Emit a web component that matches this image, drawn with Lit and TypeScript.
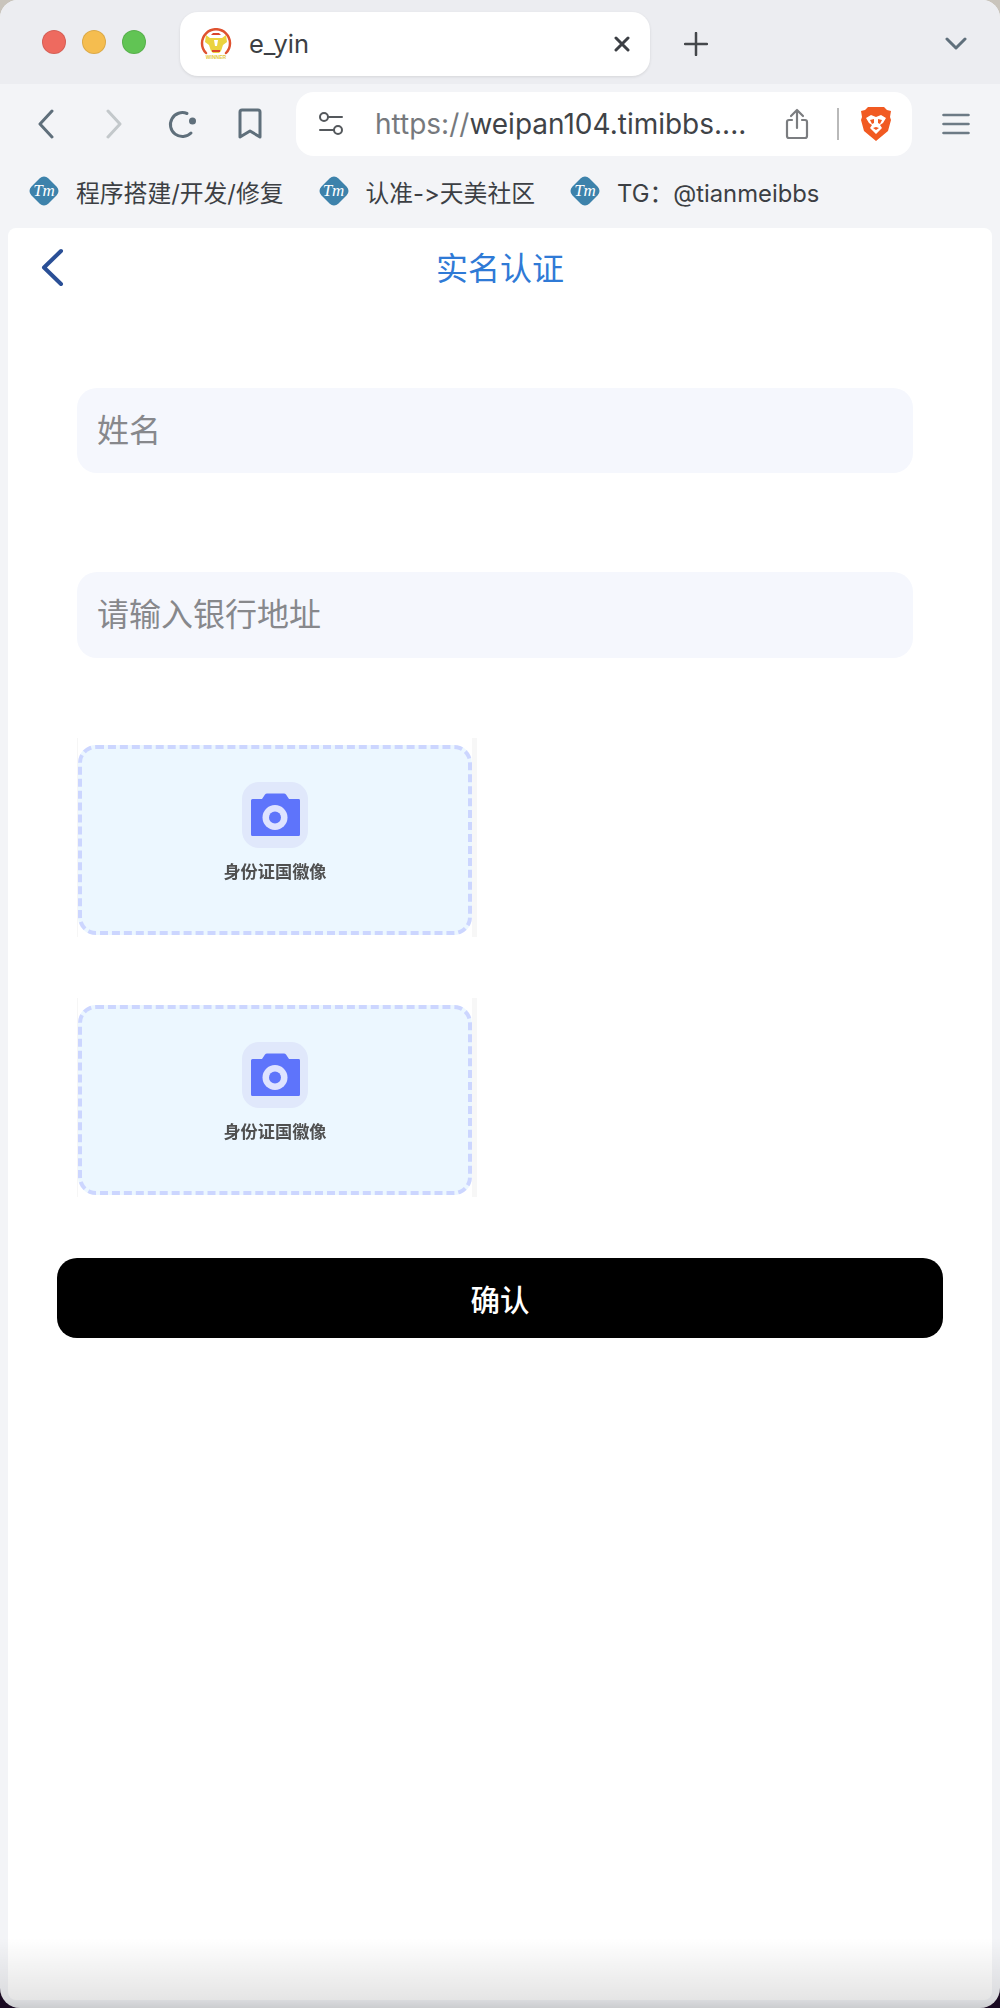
import {css, html, LitElement, svg} from "lit"
import {customElement} from "lit/decorators.js"

const tmBadge = html`<span class="tm"><i>Tm</i></span>`

const camera = svg`
  <path fill="#5e74fb" d="M1 8.500a1.500 1.500 0 0 1 1.500-1.500h9.500l3-4.500a3 3 0 0 1 2-1h17a3 3 0 0 1 2 1l3 4.500h9.500a1.500 1.500 0 0 1 1.500 1.500v34a1.500 1.500 0 0 1-1.500 1.500h-46a1.500 1.500 0 0 1-1.500-1.500z" />
  <circle cx="25" cy="25.500" r="12.500" fill="#dfe3ff" />
  <circle cx="25" cy="25.500" r="6" fill="#5e74fb" />
`

@customElement("app-root")
export class AppRoot extends LitElement {
  static styles = css`
    :host {
      display: block;
      width: 1000px;
      height: 2008px;
      background: linear-gradient(#c9c4bc 0, #c9c4bc 1900px, #1a0a22 1990px);
      font-family: Inter, "Noto Sans CJK SC", sans-serif;
      font-variant-ligatures: none;
      font-feature-settings: "calt" 0;
      color: #3c3f44;
    }
    .window {
      position: relative;
      height: 2008px;
      border-radius: 18px 18px 20px 20px;
      overflow: hidden;
      background: #f3f4f7;
      display: flex;
      flex-direction: column;
    }
    .tabstrip {
      height: 84px;
      box-sizing: border-box;
      background: #ecedf1;
      display: flex;
      padding-top: 12px;
    }
    .lights {
      display: flex;
      gap: 16px;
      margin: 18px 34px 0 42px;
    }
    .light {
      width: 24px;
      height: 24px;
      box-sizing: border-box;
      border-radius: 50%;
      border: 1px solid rgba(0, 0, 0, 0.1);
    }
    .tab {
      width: 470px;
      height: 64px;
      box-sizing: border-box;
      background: #fff;
      border-radius: 18px;
      box-shadow: 0 1px 3px rgba(0, 0, 0, 0.1);
      display: flex;
      align-items: center;
      padding: 0 20px;
      font-size: 25.500px;
    }
    .tab-title {
      margin-left: 17px;
      padding-bottom: 2px;
      flex: 1;
    }
    .plus {
      margin: 20px 0 0 34px;
    }
    .chev-down {
      margin: 25px 0 0 auto;
      margin-right: 33px;
    }
    .toolbar {
      height: 80px;
      box-sizing: border-box;
      padding: 8px 0 8px 12px;
      display: flex;
      align-items: center;
    }
    .nav {
      width: 68px;
      display: flex;
      justify-content: center;
    }
    .url {
      width: 616px;
      height: 64px;
      margin-left: 12px;
      box-sizing: border-box;
      background: #fff;
      border-radius: 18px;
      display: flex;
      align-items: center;
      padding-left: 22px;
    }
    .url-text {
      margin-left: 31px;
      width: 410px;
      font-size: 28px;
      white-space: nowrap;
      color: #404347;
    }
    .url-text span {
      color: #76797d;
    }
    .sep {
      width: 2px;
      height: 32px;
      background: #b9b9b9;
      margin: 0 21px 0 28px;
    }
    .menu {
      margin-left: 30px;
    }
    .bookmarks {
      height: 64px;
      box-sizing: border-box;
      padding: 0 0 10px 27px;
      display: flex;
      align-items: center;
      gap: 33px;
      font-size: 23.800px;
    }
    .bookmark {
      display: flex;
      align-items: center;
      gap: 15px;
      white-space: nowrap;
    }
    .tm {
      width: 34px;
      height: 34px;
      position: relative;
      display: block;
    }
    .tm::before {
      content: "";
      position: absolute;
      inset: 5px;
      background: #3d82ab;
      border-radius: 6px;
      transform: rotate(45deg);
    }
    .tm i {
      position: absolute;
      inset: 0;
      text-align: center;
      font: italic 17px/34px "Liberation Serif", serif;
      color: #fff;
    }
    .page {
      flex: 1;
      margin: 0 8px 8px;
      background: #fff;
      border-radius: 8px;
      padding: 0 0 0 49px;
    }
    .header {
      height: 80px;
      box-sizing: border-box;
      padding-bottom: 4px;
      margin-left: -49px;
      display: flex;
      align-items: center;
      justify-content: center;
      position: relative;
      color: #2f7ad6;
      font-size: 32px;
    }
    .back {
      position: absolute;
      left: 32px;
      top: 20px;
    }
    .form {
      padding: 80px 0 0 20px;
      width: 836px;
    }
    .field {
      height: 85px;
      line-height: 85px;
      box-sizing: border-box;
      padding-left: 20px;
      background: #f5f7fd;
      border-radius: 20px;
      font-size: 32px;
      color: #87888c;
      margin-bottom: 99px;
    }
    .field.last {
      height: 86px;
      margin-bottom: 80px;
    }
    .upload {
      width: 400px;
      height: 199px;
      box-sizing: border-box;
      border-left: 1px solid #f6f6f6;
      border-right: 5px solid #f7f7f7;
      padding: 7px 0 2px;
      margin-bottom: 61px;
    }
    .drop {
      height: 100%;
      box-sizing: border-box;
      background: #ecf7ff;
      border: 4px dashed #ccd6ff;
      border-radius: 18px;
      display: flex;
      flex-direction: column;
      align-items: center;
      padding-top: 33px;
      filter: blur(0.4px);
    }
    .cam {
      width: 66px;
      height: 66px;
      background: #e0e8fb;
      border-radius: 17px;
      display: flex;
      align-items: center;
      justify-content: center;
    }
    .drop-label {
      margin-top: 12px;
      font-size: 17.200px;
      line-height: 24px;
      font-weight: 700;
      color: #505050;
    }
    .confirm {
      display: block;
      width: 886px;
      height: 80px;
      border: none;
      border-radius: 20px;
      background: #000;
      color: #fff;
      font: 500 29.500px Inter, "Noto Sans CJK SC", sans-serif;
    }
    .shade {
      position: absolute;
      left: 0;
      right: 0;
      bottom: 0;
      height: 70px;
      background: linear-gradient(rgba(0, 0, 0, 0), rgba(0, 0, 0, 0.1) 88%, rgba(0, 0, 0, 0.16));
      pointer-events: none;
    }
    svg {
      display: block;
      flex: none;
    }
  `

  private stroke(color: string, width = 3) {
    return `fill:none;stroke:${color};stroke-width:${width};stroke-linecap:round;stroke-linejoin:round`
  }

  private renderUpload() {
    return html`
      <div class="upload">
        <div class="drop">
          <div class="cam">
            <svg width="50" height="46" viewBox="0 0 50 46">${camera}</svg>
          </div>
          <div class="drop-label">身份证国徽像</div>
        </div>
      </div>
    `
  }

  render() {
    const grey = this.stroke("#5f6f7b")
    return html`
      <div class="window">
        <div class="tabstrip">
          <div class="lights">
            <div class="light" style="background:#ee6a5f"></div>
            <div class="light" style="background:#f5bd4f"></div>
            <div class="light" style="background:#61c454"></div>
          </div>
          <div class="tab">
            <svg width="32" height="32" viewBox="0 0 32 32">
              <path d="M6 25A14 14 0 1 1 26 25" style=${this.stroke("#df5230", 2.500)} />
              <path fill="#ebd33f" d="M6 7l4 3h12l4-3 1 7-4 3-2 6-2 2h-6l-2-2-2-6-4-3z" />
              <path fill="#fff" d="M14 12h4l-1 6h-2z" />
              <path fill="#d9452c" d="M13 5h6l2 2H11zM12 22h8v2h-8z" />
              <text x="16" y="30.500" text-anchor="middle" font-size="5" font-family="Liberation Sans" font-weight="700" fill="#e3c93a">WINNER</text>
            </svg>
            <span class="tab-title">e_yin</span>
            <svg width="16" height="16" viewBox="0 0 16 16">
              <path d="M2 2l12 12M14 2L2 14" style=${this.stroke("#3c3f44", 3)} />
            </svg>
          </div>
          <svg class="plus" width="24" height="24" viewBox="0 0 24 24">
            <path d="M1 12h22M12 1v22" style=${this.stroke("#44474b", 2.500)} />
          </svg>
          <svg class="chev-down" width="22" height="14" viewBox="0 0 22 14">
            <path d="M2 2l9 9 9-9" style=${grey} />
          </svg>
        </div>

        <div class="toolbar">
          <div class="nav">
            <svg width="16" height="30" viewBox="0 0 16 30"><path d="M14 2L2 15l12 13" style=${grey} /></svg>
          </div>
          <div class="nav">
            <svg width="16" height="30" viewBox="0 0 16 30"><path d="M2 2l12 13L2 28" style=${this.stroke("#c3c8cb")} /></svg>
          </div>
          <div class="nav">
            <svg width="32" height="32" viewBox="0 0 32 32">
              <path d="M21 5.500A12 12 0 1 0 25 25" style=${grey} />
              <circle cx="26.500" cy="13" r="3.500" fill="#5f6f7b" />
            </svg>
          </div>
          <div class="nav">
            <svg width="24" height="32" viewBox="0 0 24 32">
              <path d="M4 2h16a2 2 0 0 1 2 2v25l-10-6-10 6V4a2 2 0 0 1 2-2z" style=${grey} />
            </svg>
          </div>
          <div class="url">
            <svg width="26" height="26" viewBox="0 0 26 26">
              <circle cx="6" cy="6" r="4" style=${this.stroke("#54585c", 2)} />
              <path d="M10 6h14M2 19h14" style=${this.stroke("#54585c", 2)} />
              <circle cx="20" cy="19" r="4" style=${this.stroke("#54585c", 2)} />
            </svg>
            <div class="url-text"><span>https://</span>weipan104.timibbs....</div>
            <svg width="24" height="32" viewBox="0 0 24 32">
              <path d="M7 12H4a2 2 0 0 0-2 2v14a2 2 0 0 0 2 2h16a2 2 0 0 0 2-2V14a2 2 0 0 0-2-2h-3M12 20V2M6 8l6-6 6 6" style=${this.stroke("#7b7d80", 2.200)} />
            </svg>
            <div class="sep"></div>
            <svg width="32" height="36" viewBox="0 0 32 36">
              <path fill="#f15a22" d="M8 1h16l3 3 4 1-1 6 1 3-3 11-6 5-6 5-6-5-6-5L1 14l1-3-1-6 4-1z" />
              <path fill="#fff" d="M11 9l5 2 5-2 5 3-3 5-3 2 2 3-6 6-6-6 2-3-3-2-3-5z" />
              <path fill="#f15a22" d="M10 14l4-1v4l-2 1zM22 14l-4-1v4l2 1zM13 22l3-1 3 1-3 2z" />
            </svg>
          </div>
          <svg class="menu" width="28" height="22" viewBox="0 0 28 22">
            <path d="M1.500 2h25M1.500 11h25M1.500 20h25" style=${this.stroke("#6c7a85", 2.600)} />
          </svg>
        </div>

        <div class="bookmarks">
          <div class="bookmark">${tmBadge}<span>程序搭建/开发/修复</span></div>
          <div class="bookmark">${tmBadge}<span>认准->天美社区</span></div>
          <div class="bookmark">${tmBadge}<span>TG：@tianmeibbs</span></div>
        </div>

        <div class="page">
          <div class="header">
            <svg class="back" width="24" height="40" viewBox="0 0 24 40">
              <path d="M21 3L4 19.500 21 36" style=${this.stroke("#2a4f96", 4)} />
            </svg>
            实名认证
          </div>
          <div class="form">
            <div class="field">姓名</div>
            <div class="field last">请输入银行地址</div>
            ${this.renderUpload()}
            ${this.renderUpload()}
          </div>
          <button class="confirm">确认</button>
        </div>
        <div class="shade"></div>
      </div>
    `
  }
}
